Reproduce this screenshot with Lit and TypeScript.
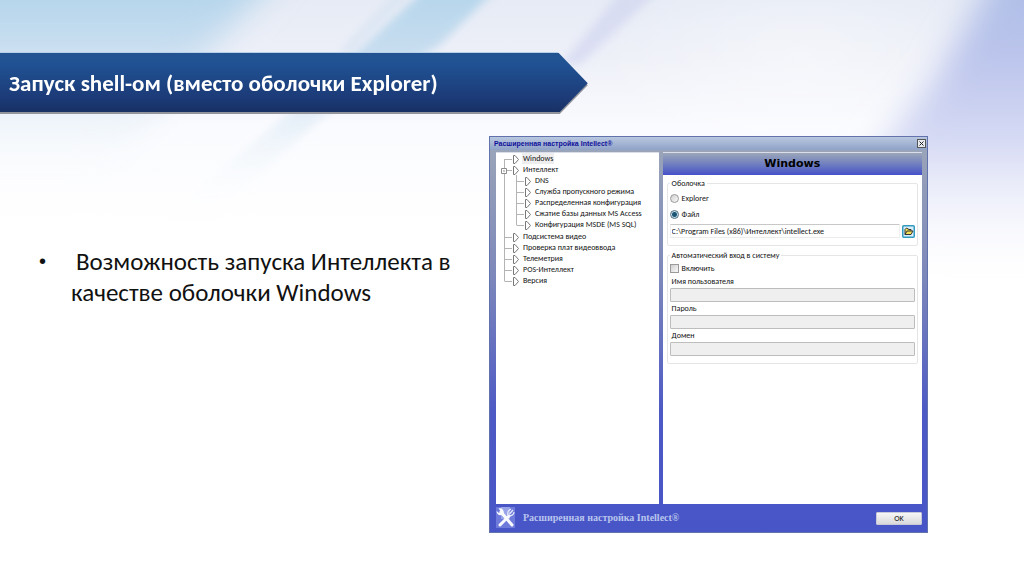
import { LitElement, html, css, svg } from "lit";
import { customElement, state } from "lit/decorators.js";

interface TreeNode {
  label: string;
  selected?: boolean;
  children?: TreeNode[];
}

const TREE: TreeNode[] = [
  { label: "Windows", selected: true },
  {
    label: "Интеллект",
    children: [
      { label: "DNS" },
      { label: "Служба пропускного режима" },
      { label: "Распределенная конфигурация" },
      { label: "Сжатие базы данных MS Access" },
      { label: "Конфигурация MSDE (MS SQL)" },
    ],
  },
  { label: "Подсистема видео" },
  { label: "Проверка плат видеоввода" },
  { label: "Телеметрия" },
  { label: "POS-Интеллект" },
  { label: "Версия" },
];

@customElement("slide-backdrop")
class SlideBackdrop extends LitElement {
  static styles = css`
    :host { display: block; }
    .art { display: block; width: 100%; height: 100%; }
  `;

  render() {
    return html`<svg class="art" viewBox="0 0 1024 576" preserveAspectRatio="none" aria-hidden="true">
      <defs>
        <linearGradient id="base" x1="0" y1="0" x2="0" y2="1">
          <stop offset="0" stop-color="#e6ebf5" />
          <stop offset=".1" stop-color="#eef0f8" />
          <stop offset=".22" stop-color="#fafbfe" />
          <stop offset=".4" stop-color="#ffffff" />
        </linearGradient>
        <linearGradient id="sky" x1="0" y1="0" x2="0" y2="1">
          <stop offset="0" stop-color="#a9d0e9" />
          <stop offset=".35" stop-color="#c5dcef" />
          <stop offset=".7" stop-color="#edf4fa" stop-opacity=".8" />
          <stop offset="1" stop-color="#ffffff" stop-opacity="0" />
        </linearGradient>
        <linearGradient id="violet" x1="0" y1="0" x2="0" y2="1">
          <stop offset="0" stop-color="#a9bbe5" />
          <stop offset=".3" stop-color="#bcc5ec" />
          <stop offset=".55" stop-color="#d6daf4" />
          <stop offset="1" stop-color="#ffffff" stop-opacity="0" />
        </linearGradient>
        <radialGradient id="glow"><stop offset="0" stop-color="#fff" stop-opacity=".4" /><stop offset="1" stop-color="#fff" stop-opacity="0" /></radialGradient>
        <filter id="soft" x="-20%" y="-20%" width="140%" height="140%"><feGaussianBlur stdDeviation="16" /></filter>
        <filter id="edge" x="-20%" y="-20%" width="140%" height="140%"><feGaussianBlur stdDeviation="4" /></filter>
      </defs>
      <rect width="1024" height="576" fill="url(#base)" />
      <ellipse cx="800" cy="60" rx="200" ry="110" fill="url(#glow)" />
      <path d="M-60 -40H290L200 60L90 190H-60Z" fill="url(#sky)" filter="url(#soft)" />
      <path d="M425 -10H495L440 45L325 115L215 215H165L275 125L355 53Z" fill="url(#sky)" opacity=".8" filter="url(#edge)" />
      <path d="M400 -10H412L350 53H338Z" fill="#d3e2f1" opacity=".7" filter="url(#edge)" />
      <path d="M622 -10H660L580 65H560Z" fill="#ccd0ef" opacity=".55" filter="url(#edge)" />
      <path d="M1005 -40H1090V290H930L860 170L935 80Z" fill="url(#violet)" filter="url(#soft)" />
    </svg>`;
  }
}

@customElement("settings-window")
class SettingsWindow extends LitElement {
  @state() private shell = "file";

  static styles = css`
    :host {
      display: flex;
      flex-direction: column;
      box-sizing: border-box;
      font: 8px/11px Carlito, Calibri, "Liberation Sans", sans-serif;
      color: #111;
      border: 1px solid #6272ad;
      background: linear-gradient(#a0aabd 0, #98a2b8 5%, #7d88bb 35%, #4d59c4 70%, #4855c7);
    }
    .titlebar {
      display: flex;
      align-items: center;
      justify-content: space-between;
      height: 13px;
      padding: 0 1px 0 4px;
      background: linear-gradient(#b9c8e0, #8fa2c7);
    }
    .title { margin: 0; font: bold 7px/11px "Liberation Sans", Arial, sans-serif; color: #10109a; }
    .close { display: flex; padding: 0; border: 0; background: none; }
    .panes {
      flex: 1;
      display: grid;
      grid-template-columns: 163fr 260fr;
      gap: 4px;
      padding: 2px 5px 0 6px;
    }
    .pane { background: #fff; min-width: 0; border-top: 1px solid #d9deea; }
    .tree, .branch { margin: 0; padding: 0; list-style: none; }
    .tree { padding: 0 0 0 4px; }
    .branch {
      padding: 0 0 1px 12px;
      background: linear-gradient(#b4b4b4, #b4b4b4) 4px 0 / 1px 100% no-repeat;
    }
    .node { display: flex; align-items: center; height: 11px; white-space: nowrap; }
    .label { margin-left: 2px; padding: 0 1px; }
    .selected { background: #eee; }
    .twig { flex: none; }
    .banner {
      margin: 0;
      height: 22px;
      font: bold 11px/22px "DejaVu Sans", Verdana, sans-serif;
      text-align: center;
      color: #000;
      background: linear-gradient(#9ba6b9, #6c7bc0 55%, #4551c8);
    }
    .form { display: flex; flex-direction: column; gap: 4px; padding: 3px 4px 0; }
    .group { margin: 0; padding: 0 2px 7px 2px; border: 1px solid #e5e5e8; border-radius: 2px; min-width: 0; }
    .group-title { padding: 0 2px; line-height: 11px; }
    .choice { display: flex; align-items: center; gap: 3px; height: 16px; }
    .choice:first-of-type { margin-top: 1px; }
    .choice-short { height: 13px; }
    .radio, .check {
      appearance: none;
      box-sizing: border-box;
      width: 9px;
      height: 9px;
      margin: 0;
      border: 1px solid #9a9a9a;
      background: linear-gradient(135deg, #cfcfcf, #fafafa);
    }
    .radio { border-radius: 50%; }
    .radio:checked { border-color: #567183; background: radial-gradient(#1b5674 0 2px, #c2dbe7 3px); }
    .path { display: flex; align-items: center; gap: 2px; margin-top: 2px; }
    .field {
      box-sizing: border-box;
      display: block;
      width: 100%;
      height: 14px;
      margin: 0;
      padding: 0 1px;
      border: 1px solid #bdbdbd;
      border-radius: 1px;
      background: #efefef;
      font: inherit;
      color: #111;
    }
    .file { flex: 1; width: auto; min-width: 0; border-color: #c8c8c8 #f0f0f0 #ececec; background: #fff; }
    .browse { display: flex; padding: 0; border: 0; background: none; }
    .caption { display: block; height: 13px; line-height: 13px; padding-left: 2px; }
    .footer { display: flex; align-items: center; height: 28px; padding: 0 5px 0 6px; }
    .brand { margin: 0 auto 0 6px; font: bold 10px/14px "Liberation Serif", "Times New Roman", serif; color: #b9c5ee; }
    .ok {
      width: 46px;
      height: 13px;
      padding: 0;
      border: 1px solid #c8cad8;
      border-radius: 1px;
      background: linear-gradient(#f7f7f7, #d9d9dc);
      font: inherit;
      color: #111;
    }
  `;

  private twig(last: boolean, expandable: boolean, first: boolean) {
    return html`<svg class="twig" width="20" height="12" viewBox="0 0 20 12" aria-hidden="true">
      <path d="M4.5 ${first ? 6 : 0}V${last ? 6 : 12}M4.5 6.5H12" fill="none" stroke="#b4b4b4" />
      ${expandable ? svg`<path d="M1.5 4.5h5v5h-5zM3 7h2" fill="#fff" stroke="#8c8c8c" />` : ""}
      <path d="M13.5 2.500H15L18.500 6.500L15 10.500H13.500Z" fill="#fff" stroke="#777" />
    </svg>`;
  }

  private branch(nodes: TreeNode[], root: boolean): unknown {
    return nodes.map((n, i) => html`<li class="item">
      <div class="node">
        ${this.twig(i === nodes.length - 1, !!n.children, root && i === 0)}
        <span class="label ${n.selected ? "selected" : ""}">${n.label}</span>
      </div>
      ${n.children ? html`<ul class="branch">${this.branch(n.children, false)}</ul>` : ""}
    </li>`);
  }

  private radio(value: string, label: string) {
    return html`<label class="choice"><input class="radio" type="radio" name="shell" .checked=${this.shell === value}
      @change=${() => (this.shell = value)} />${label}</label>`;
  }

  render() {
    return html`
      <header class="titlebar">
        <h2 class="title">Расширенная настройка Intellect®</h2>
        <button class="close" aria-label="Закрыть"><svg width="9" height="9" viewBox="0 0 9 9">
          <rect x=".5" y=".5" width="8" height="8" fill="#e8ebf0" stroke="#555" /><path d="M2.5 2.5l4 4m0-4l-4 4" stroke="#222" />
        </svg></button>
      </header>
      <div class="panes">
        <nav class="pane"><ul class="tree">${this.branch(TREE, true)}</ul></nav>
        <section class="pane">
          <h3 class="banner">Windows</h3>
          <form class="form">
            <fieldset class="group">
              <legend class="group-title">Оболочка</legend>
              ${this.radio("explorer", "Explorer")}
              ${this.radio("file", "Файл")}
              <div class="path">
                <input class="field file" aria-label="Файл" value="C:\\Program Files (x86)\\Интеллект\\intellect.exe" />
                <button class="browse" type="button" aria-label="Обзор"><svg width="13" height="13" viewBox="0 0 13 13">
                  <rect x=".75" y=".75" width="11.5" height="11.5" rx="1" fill="#d9f0fa" stroke="#329ac0" stroke-width="1.5" />
                  <path d="M3 9.5V4.5L4.5 3L7 4.5H9V6M3 9.5L5 6H11L9 9.5Z" fill="#f2df55" stroke="#333" />
                </svg></button>
              </div>
            </fieldset>
            <fieldset class="group">
              <legend class="group-title">Автоматический вход в систему</legend>
              <label class="choice choice-short"><input class="check" type="checkbox" />Включить</label>
              <label class="caption" for="user">Имя пользователя</label>
              <input class="field" id="user" disabled />
              <label class="caption" for="password">Пароль</label>
              <input class="field" id="password" type="password" disabled />
              <label class="caption" for="domain">Домен</label>
              <input class="field" id="domain" disabled />
            </fieldset>
          </form>
        </section>
      </div>
      <footer class="footer">
        <svg width="21" height="22" viewBox="0 0 21 22" aria-hidden="true">
          <rect width="19" height="21" fill="#6e7bda" />
          <rect x="5" width="9" height="12" fill="#98a3e8" />
          <path d="M4 18L13 9M5 5L16 18" stroke="#f8faff" stroke-width="3" stroke-linecap="round" />
          <path d="M2.500 1.500L5 4.500L3 6L.5 4C.5 7 3 9 6 8C9 7 8 3 5.500 1.500C4.500 1 3.500 1 2.500 1.500Z" fill="#f8faff" />
          <path d="M12 8C11 5 13 3 15 2M13 9C16 9 18 7 18 5M13.500 7L17 3" fill="none" stroke="#e9edff" stroke-width="1.200" />
        </svg>
        <p class="brand">Расширенная настройка Intellect®</p>
        <button class="ok">OK</button>
      </footer>`;
  }
}

@customElement("app-root")
class AppRoot extends LitElement {
  static styles = css`
    :host {
      display: grid;
      min-height: 100vh;
      overflow: hidden;
      font-family: Carlito, Calibri, Lato, sans-serif;
      color: #111;
    }
    .backdrop, .slide { grid-area: 1 / 1; }
    .backdrop { height: 100%; min-height: 100vh; }
    .slide {
      z-index: 1;
      display: grid;
      grid-template-columns: minmax(0, 489fr) minmax(0, 439fr) minmax(0, 96fr);
      grid-template-rows: auto 1fr;
      padding: 52px 0 43px;
      box-sizing: border-box;
      row-gap: 24px;
    }
    .ribbon { grid-column: 1 / -1; width: 57.4%; filter: drop-shadow(0 2px 0 #92959c); margin-right: auto; }
    .ribbon-face {
      display: flex;
      align-items: center;
      height: 60px;
      padding: 2px 32px 0 9px;
      box-sizing: border-box;
      clip-path: polygon(0 0, calc(100% - 30px) 0, 100% 52%, calc(100% - 28px) 100%, 0 100%);
      background: linear-gradient(#b7d0ea 0 1px, #235391 1px, #205293 20%, #1c3b78 75%, #183165);
    }
    .heading { margin: 0; font-size: 23px; line-height: 28px; color: #fff; white-space: nowrap; }
    .points { margin: 110px 0 0; padding: 0 0 0 39px; list-style: none; font-size: 25px; line-height: 31px; }
    .point { display: flex; gap: 24px; }
    .bullet { flex: none; width: 8px; font-family: "Liberation Sans", Arial, sans-serif; font-size: 20px; }
    .text { text-indent: 5px; }
  `;

  render() {
    return html`
      <slide-backdrop class="backdrop"></slide-backdrop>
      <main class="slide">
        <header class="ribbon"><div class="ribbon-face"><h1 class="heading">Запуск shell-ом (вместо оболочки Explorer)</h1></div></header>
        <ul class="points">
          <li class="point"><span class="bullet">•</span><span class="text">Возможность запуска Интеллекта в качестве оболочки Windows</span></li>
        </ul>
        <settings-window></settings-window>
      </main>`;
  }
}
